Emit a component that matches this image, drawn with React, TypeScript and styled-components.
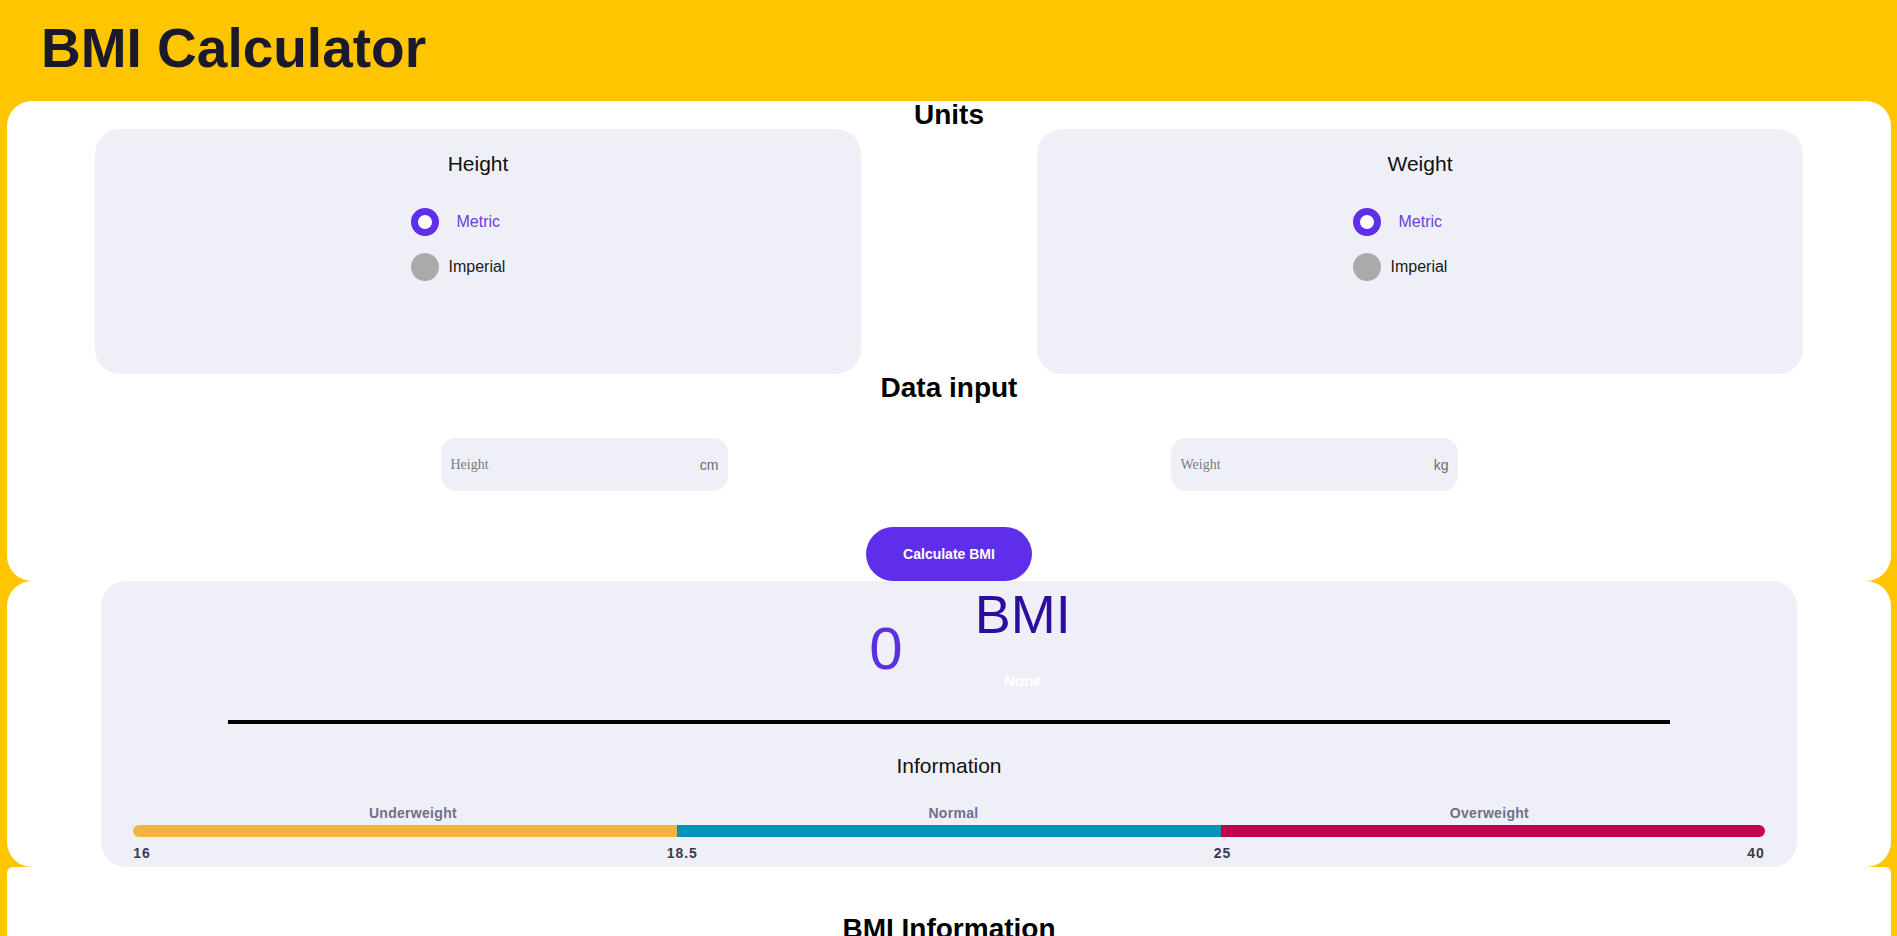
import React, { useState } from "react";
import styled, { createGlobalStyle } from "styled-components";

const GlobalStyle = createGlobalStyle`
  html, body {
    margin: 0;
    padding: 0;
    background: #ffc500;
  }
  body {
    font-family: "Liberation Sans", Arial, sans-serif;
    color: #111;
  }
  * { box-sizing: border-box; }
`;

const Page = styled.div`
  display: flex;
  flex-direction: column;
  min-height: 100vh;
`;

const Header = styled.header`
  height: 101px;
  padding: 17px 0 0 41px;
`;

const Title = styled.h1`
  margin: 0;
  font-size: 55px;
  font-weight: 700;
  color: #1a1a2c;
  line-height: 62px;
`;

const Panel = styled.section<{ $radius?: string }>`
  background: #fff;
  margin: 0 6px 0 7px;
  border-radius: ${(p) => p.$radius ?? "25px"};
  display: flex;
  flex-direction: column;
  align-items: center;
`;

const SectionHeading = styled.h2`
  margin: 0;
  font-size: 28px;
  line-height: 28px;
  font-weight: 700;
  color: #000;
  text-align: center;
`;

const UnitRow = styled.div`
  width: 100%;
  display: flex;
  justify-content: space-around;
`;

const UnitCard = styled.div`
  width: 40.7%;
  height: 245px;
  background: #eff0f7;
  border-radius: 25px;
  padding-top: 23px;
  display: flex;
  flex-direction: column;
  align-items: center;
`;

const CardLabel = styled.div`
  font-size: 21px;
  line-height: normal;
  color: #111;
`;

const RadioGroup = styled.div`
  width: 135px;
  margin-top: 32px;
  display: flex;
  flex-direction: column;
  align-items: flex-start;
  gap: 17px;
`;

const RadioRow = styled.label`
  display: flex;
  align-items: center;
  cursor: pointer;
`;

const RadioDot = styled.span<{ $checked: boolean }>`
  width: 28px;
  height: 28px;
  border-radius: 50%;
  background: ${(p) => (p.$checked ? "#fff" : "#aaaaaa")};
  border: ${(p) => (p.$checked ? "7px solid #5f2eea" : "none")};
  flex-shrink: 0;
`;

const RadioText = styled.span<{ $checked: boolean }>`
  font-size: 16px;
  margin-left: ${(p) => (p.$checked ? 18 : 10)}px;
  color: ${(p) => (p.$checked ? "#6a3fdc" : "#1a1a1a")};
`;

const InputRow = styled.div`
  margin-top: 36px;
  display: flex;
  justify-content: center;
  gap: 443px;
`;

const InputBox = styled.div`
  width: 287px;
  height: 53px;
  background: #eff0f7;
  border-radius: 15px;
  display: flex;
  align-items: center;
  padding: 0 9px 0 10px;
`;

const Field = styled.input`
  flex: 1;
  min-width: 0;
  border: none;
  outline: none;
  background: transparent;
  font-family: "Liberation Serif", "Times New Roman", serif;
  font-size: 14px;
  color: #333;
  padding: 0;
  &::placeholder {
    color: #7a7a80;
  }
`;

const Unit = styled.span`
  font-size: 14px;
  color: #6b6b70;
`;

const CalcButton = styled.button`
  margin-top: 36px;
  width: 166px;
  height: 54px;
  border: none;
  border-radius: 27px;
  background: #5f2eea;
  color: #fff;
  font-family: "Liberation Sans", Arial, sans-serif;
  font-size: 14px;
  font-weight: 700;
  cursor: pointer;
`;

const ResultCard = styled.div`
  width: 90%;
  background: #eff0f7;
  border-radius: 25px;
  padding: 3px 0 6px;
  display: flex;
  flex-direction: column;
  align-items: center;
`;

const ResultRow = styled.div`
  display: flex;
  justify-content: center;
  align-items: flex-start;
  gap: 72px;
  padding-left: 42px;
`;

const Score = styled.div`
  margin-top: 30px;
  font-size: 60px;
  line-height: normal;
  color: #5a30e2;
`;

const ResultCol = styled.div`
  display: flex;
  flex-direction: column;
  align-items: center;
`;

const ResultTitle = styled.div`
  font-size: 54px;
  line-height: 60px;
  color: #2e0ca0;
`;

const Category = styled.div`
  margin-top: 29px;
  font-size: 15px;
  font-weight: 700;
  line-height: 16px;
  color: #fff;
`;

const Divider = styled.div`
  margin-top: 31px;
  width: 85%;
  height: 4px;
  background: #000;
`;

const InfoLabel = styled.div`
  margin-top: 30px;
  font-size: 21px;
  line-height: normal;
  color: #111;
`;

const Scale = styled.div`
  width: 100%;
  padding: 0 32px;
  margin-top: 27px;
`;

const ScaleLabels = styled.div`
  display: flex;
  justify-content: space-around;
  font-size: 14px;
  font-weight: 700;
  line-height: 16px;
  letter-spacing: 0.3px;
  color: #707088;
`;

const Bar = styled.div`
  margin-top: 4px;
  display: flex;
  height: 12px;
  border-radius: 6px;
  overflow: hidden;
`;

const Segment = styled.div<{ $color: string }>`
  flex: 1;
  background: ${(p) => p.$color};
`;

const ScaleNumbers = styled.div`
  margin-top: 8px;
  display: flex;
  justify-content: space-between;
  font-size: 14px;
  font-weight: 700;
  line-height: 16px;
  letter-spacing: 1px;
  color: #3b3b4d;
`;

const InfoPanel = styled(Panel)`
  padding: 48px 0 40px;
`;

type UnitSystem = "metric" | "imperial";

function UnitChooser({
  label,
  value,
  onChange,
}: {
  label: string;
  value: UnitSystem;
  onChange: (v: UnitSystem) => void;
}) {
  return (
    <UnitCard>
      <CardLabel>{label}</CardLabel>
      <RadioGroup>
        <RadioRow onClick={() => onChange("metric")}>
          <RadioDot $checked={value === "metric"} />
          <RadioText $checked={value === "metric"}>Metric</RadioText>
        </RadioRow>
        <RadioRow onClick={() => onChange("imperial")}>
          <RadioDot $checked={value === "imperial"} />
          <RadioText $checked={value === "imperial"}>Imperial</RadioText>
        </RadioRow>
      </RadioGroup>
    </UnitCard>
  );
}

export default function App() {
  const [hUnit, setHUnit] = useState<UnitSystem>("metric");
  const [wUnit, setWUnit] = useState<UnitSystem>("metric");

  return (
    <Page>
      <GlobalStyle />
      <Header>
        <Title>BMI Calculator</Title>
      </Header>

      <Panel>
        <SectionHeading>Units</SectionHeading>
        <UnitRow>
          <UnitChooser label="Height" value={hUnit} onChange={setHUnit} />
          <UnitChooser label="Weight" value={wUnit} onChange={setWUnit} />
        </UnitRow>
        <SectionHeading>Data input</SectionHeading>
        <InputRow>
          <InputBox>
            <Field placeholder="Height" />
            <Unit>{hUnit === "metric" ? "cm" : "in"}</Unit>
          </InputBox>
          <InputBox>
            <Field placeholder="Weight" />
            <Unit>{wUnit === "metric" ? "kg" : "lb"}</Unit>
          </InputBox>
        </InputRow>
        <CalcButton>Calculate BMI</CalcButton>
      </Panel>

      <Panel>
        <ResultCard>
          <ResultRow>
            <Score>0</Score>
            <ResultCol>
              <ResultTitle>BMI</ResultTitle>
              <Category>None</Category>
            </ResultCol>
          </ResultRow>
          <Divider />
          <InfoLabel>Information</InfoLabel>
          <Scale>
            <ScaleLabels>
              <span>Underweight</span>
              <span>Normal</span>
              <span>Overweight</span>
            </ScaleLabels>
            <Bar>
              <Segment $color="#f2b441" />
              <Segment $color="#0494b7" />
              <Segment $color="#c4004f" />
            </Bar>
            <ScaleNumbers>
              <span>16</span>
              <span>18.5</span>
              <span>25</span>
              <span>40</span>
            </ScaleNumbers>
          </Scale>
        </ResultCard>
      </Panel>

      <InfoPanel $radius="6px 6px 0 0">
        <SectionHeading>BMI Information</SectionHeading>
      </InfoPanel>
    </Page>
  );
}
